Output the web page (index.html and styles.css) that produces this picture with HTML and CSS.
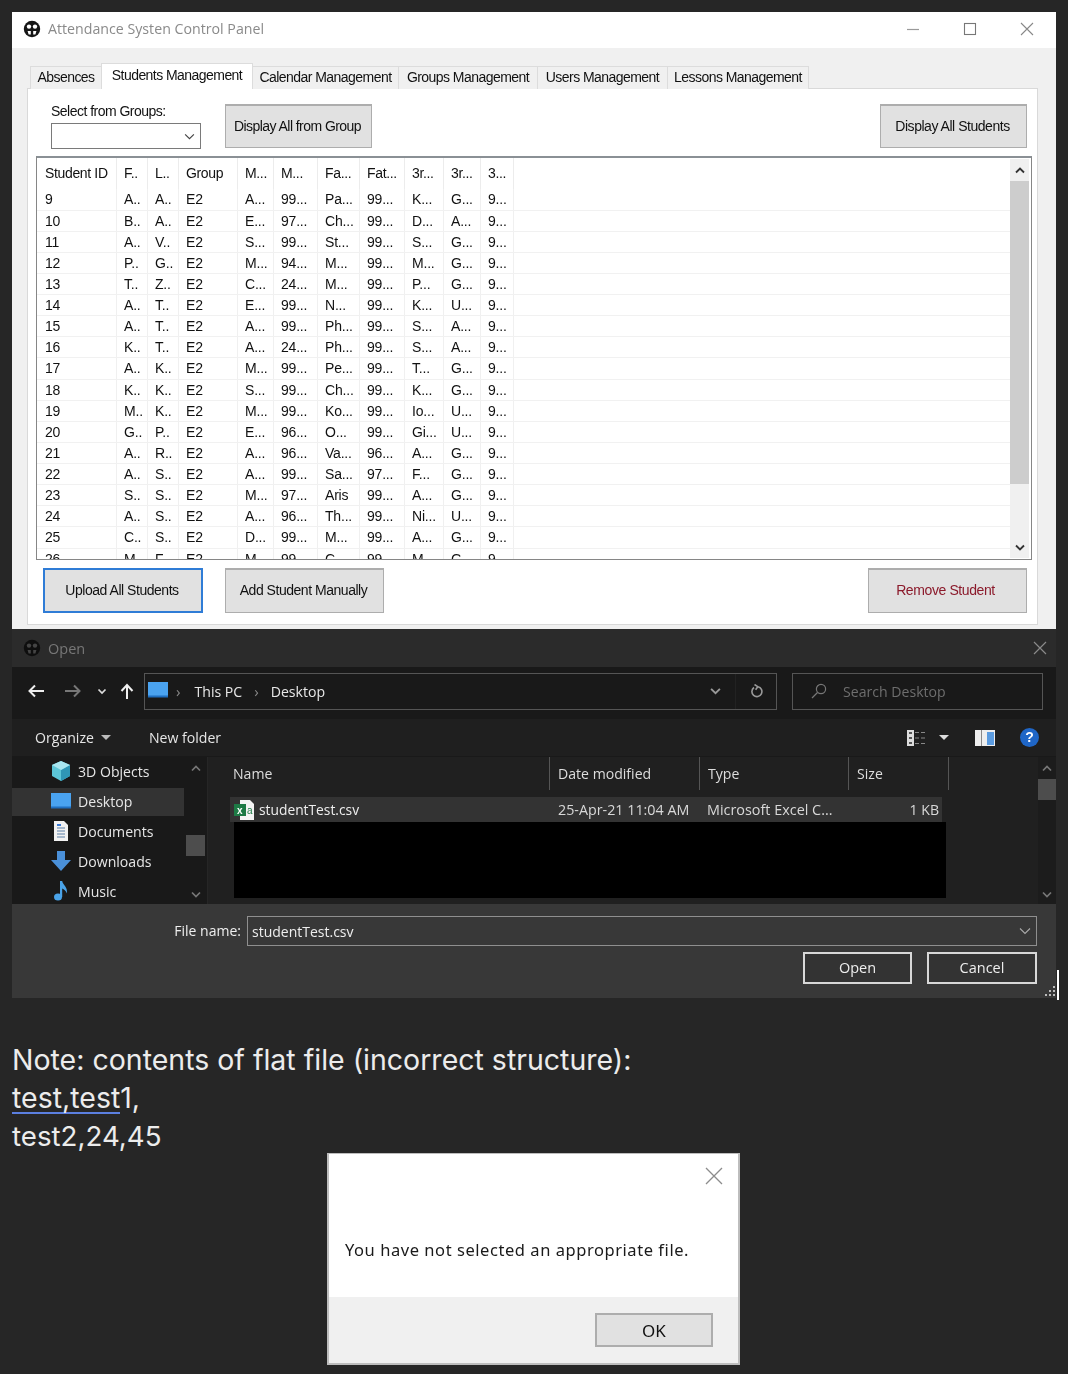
FILE: index.html
```html
<!DOCTYPE html>
<html lang="en">
<head>
<meta charset="utf-8">
<title>Attendance System Control Panel</title>
<link rel="stylesheet" href="styles.css">
</head>
<body>
<section class="win">
  <header class="titlebar">
    <svg class="appicon" viewBox="0 0 18 18"><circle cx="9" cy="9" r="8.2" fill="#161616"/><circle cx="6" cy="6.6" r="2.2" fill="#fff"/><circle cx="12" cy="6.6" r="2.2" fill="#fff"/><path d="M4.6 11h3.2v3.6H5.6zM10.2 11h3.2l-1 3.6h-2.2z" fill="#fff"/></svg>
    <span class="title">Attendance Systen Control Panel</span>
    <div class="winctl">
      <svg viewBox="0 0 14 14" class="ctl"><path d="M1 7.5h12" stroke="#9a9a9a" stroke-width="1.2"/></svg>
      <svg viewBox="0 0 14 14" class="ctl"><rect x="1.5" y="1.5" width="11" height="11" fill="none" stroke="#777" stroke-width="1.1"/></svg>
      <svg viewBox="0 0 14 14" class="ctl"><path d="M1 1l12 12M13 1L1 13" stroke="#888" stroke-width="1.1"/></svg>
    </div>
  </header>
  <div class="winbody">
    <nav class="tabs">
      <span class="tab tab-abs">Absences</span>
      <span class="tab tab-active">Students Management</span>
      <span class="tab tab-cal">Calendar Management</span>
      <span class="tab tab-grp">Groups Management</span>
      <span class="tab tab-usr">Users Management</span>
      <span class="tab tab-les">Lessons Management</span>
    </nav>
    <div class="panel">
      <div class="toprow">
        <div class="groupsel">
          <label class="sel-label">Select from Groups:</label>
          <div class="combo"><svg viewBox="0 0 12 8" class="combo-arrow"><path d="M1 1.5l5 5 5-5" fill="none" stroke="#444" stroke-width="1.3"/></svg></div>
        </div>
        <button class="btn btn-group">Display All from Group</button>
        <button class="btn btn-all">Display All Students</button>
      </div>
      <div class="table">
        <div class="rows">
          <div class="row head"><span>Student ID</span><span>F..</span><span>L..</span><span>Group</span><span>M...</span><span>M...</span><span>Fa...</span><span>Fat...</span><span>3r...</span><span>3r...</span><span>3...</span></div>
          <div class="row"><span>9</span><span>A..</span><span>A..</span><span>E2</span><span>A...</span><span>99...</span><span>Pa...</span><span>99...</span><span>K...</span><span>G...</span><span>9...</span></div>
          <div class="row"><span>10</span><span>B..</span><span>A..</span><span>E2</span><span>E...</span><span>97...</span><span>Ch...</span><span>99...</span><span>D...</span><span>A...</span><span>9...</span></div>
          <div class="row"><span>11</span><span>A..</span><span>V..</span><span>E2</span><span>S...</span><span>99...</span><span>St...</span><span>99...</span><span>S...</span><span>G...</span><span>9...</span></div>
          <div class="row"><span>12</span><span>P..</span><span>G..</span><span>E2</span><span>M...</span><span>94...</span><span>M...</span><span>99...</span><span>M...</span><span>G...</span><span>9...</span></div>
          <div class="row"><span>13</span><span>T..</span><span>Z..</span><span>E2</span><span>C...</span><span>24...</span><span>M...</span><span>99...</span><span>P...</span><span>G...</span><span>9...</span></div>
          <div class="row"><span>14</span><span>A..</span><span>T..</span><span>E2</span><span>E...</span><span>99...</span><span>N...</span><span>99...</span><span>K...</span><span>U...</span><span>9...</span></div>
          <div class="row"><span>15</span><span>A..</span><span>T..</span><span>E2</span><span>A...</span><span>99...</span><span>Ph...</span><span>99...</span><span>S...</span><span>A...</span><span>9...</span></div>
          <div class="row"><span>16</span><span>K..</span><span>T..</span><span>E2</span><span>A...</span><span>24...</span><span>Ph...</span><span>99...</span><span>S...</span><span>A...</span><span>9...</span></div>
          <div class="row"><span>17</span><span>A..</span><span>K..</span><span>E2</span><span>M...</span><span>99...</span><span>Pe...</span><span>99...</span><span>T...</span><span>G...</span><span>9...</span></div>
          <div class="row"><span>18</span><span>K..</span><span>K..</span><span>E2</span><span>S...</span><span>99...</span><span>Ch...</span><span>99...</span><span>K...</span><span>G...</span><span>9...</span></div>
          <div class="row"><span>19</span><span>M..</span><span>K..</span><span>E2</span><span>M...</span><span>99...</span><span>Ko...</span><span>99...</span><span>Io...</span><span>U...</span><span>9...</span></div>
          <div class="row"><span>20</span><span>G..</span><span>P..</span><span>E2</span><span>E...</span><span>96...</span><span>O...</span><span>99...</span><span>Gi...</span><span>U...</span><span>9...</span></div>
          <div class="row"><span>21</span><span>A..</span><span>R..</span><span>E2</span><span>A...</span><span>96...</span><span>Va...</span><span>96...</span><span>A...</span><span>G...</span><span>9...</span></div>
          <div class="row"><span>22</span><span>A..</span><span>S..</span><span>E2</span><span>A...</span><span>99...</span><span>Sa...</span><span>97...</span><span>F...</span><span>G...</span><span>9...</span></div>
          <div class="row"><span>23</span><span>S..</span><span>S..</span><span>E2</span><span>M...</span><span>97...</span><span>Aris</span><span>99...</span><span>A...</span><span>G...</span><span>9...</span></div>
          <div class="row"><span>24</span><span>A..</span><span>S..</span><span>E2</span><span>A...</span><span>96...</span><span>Th...</span><span>99...</span><span>Ni...</span><span>U...</span><span>9...</span></div>
          <div class="row"><span>25</span><span>C..</span><span>S..</span><span>E2</span><span>D...</span><span>99...</span><span>M...</span><span>99...</span><span>A...</span><span>G...</span><span>9...</span></div>
          <div class="row"><span>26</span><span>M..</span><span>F..</span><span>E2</span><span>M...</span><span>99...</span><span>C...</span><span>99...</span><span>M...</span><span>G...</span><span>9...</span></div>
        </div>
        <div class="vscroll">
          <div class="vs-btn"><svg viewBox="0 0 10 7"><path d="M1 5.5l4-4 4 4" fill="none" stroke="#333" stroke-width="1.8"/></svg></div>
          <div class="vs-track"><div class="vs-thumb"></div></div>
          <div class="vs-btn"><svg viewBox="0 0 10 7"><path d="M1 1.500l4 4 4-4" fill="none" stroke="#333" stroke-width="1.8"/></svg></div>
        </div>
      </div>
      <div class="botrow">
        <button class="btn btn-upload">Upload All Students</button>
        <button class="btn btn-add">Add Student Manually</button>
        <button class="btn btn-remove">Remove Student</button>
      </div>
    </div>
  </div>
</section>

<section class="dlg">
  <header class="dlg-title">
    <svg class="appicon" viewBox="0 0 18 18"><circle cx="9" cy="9" r="8.2" fill="#0e0e0e"/><circle cx="6" cy="6.6" r="2.2" fill="#444"/><circle cx="12" cy="6.6" r="2.2" fill="#444"/><path d="M4.6 11h3.2v3.6H5.6zM10.2 11h3.2l-1 3.6h-2.2z" fill="#444"/></svg>
    <span class="dlg-open">Open</span>
    <svg viewBox="0 0 14 14" class="dlg-x"><path d="M1 1l12 12M13 1L1 13" stroke="#8a8a8a" stroke-width="1.2"/></svg>
  </header>
  <div class="navbar">
    <svg viewBox="0 0 18 14" class="nav-i"><path d="M17 7H3M8 1.5L2.5 7 8 12.500" fill="none" stroke="#eee" stroke-width="2"/></svg>
    <svg viewBox="0 0 18 14" class="nav-i nav-fwd"><path d="M1 7h14M10 1.500L15.500 7 10 12.500" fill="none" stroke="#777" stroke-width="2"/></svg>
    <svg viewBox="0 0 10 7" class="nav-d"><path d="M1.500 1.500l3.500 3.500 3.500-3.500" fill="none" stroke="#ddd" stroke-width="1.700"/></svg>
    <svg viewBox="0 0 14 16" class="nav-u"><path d="M7 16V2.500M1.500 8L7 2l5.500 6" fill="none" stroke="#f0f0f0" stroke-width="2"/></svg>
    <div class="addr">
      <svg viewBox="0 0 20 16" class="ico-desk"><rect width="20" height="15" fill="#4aa3f0"/><rect y="13.500" width="20" height="2" fill="#1f6fc0"/></svg>
      <span class="chev chev-first">›</span><span class="crumb">This PC</span><span class="chev">›</span><span class="crumb">Desktop</span>
      <svg viewBox="0 0 10 7" class="addr-d"><path d="M1 1.500l4 4 4-4" fill="none" stroke="#999" stroke-width="1.700"/></svg>
      <div class="refresh"><svg viewBox="0 0 14 14" class="ico-ref"><path d="M4 3.500a5 5 0 1 0 4-.8M4.500 0.500l3.300 2.200-2.200 3" fill="none" stroke="#999" stroke-width="1.600"/></svg></div>
    </div>
    <div class="search">
      <svg viewBox="0 0 16 16" class="ico-search"><circle cx="10" cy="6" r="4.600" fill="none" stroke="#777" stroke-width="1.200"/><path d="M6.500 9.500L1 15" stroke="#777" stroke-width="1.300"/></svg>
      <span>Search Desktop</span>
    </div>
  </div>
  <div class="toolbar">
    <span class="tool">Organize</span><i class="caret"></i>
    <span class="tool tool-new">New folder</span>
    <div class="viewicons">
      <svg viewBox="0 0 21 16" class="ico-list"><rect width="7" height="16" fill="#ddd"/><path d="M2 3h3M2 8h3M2 13h3" stroke="#555" stroke-width="2"/><path d="M8 2.500h12M8 8h12M8 13.500h12" stroke="#888" stroke-dasharray="4 2"/></svg>
      <i class="caret caret-v"></i>
      <svg viewBox="0 0 20 16" class="ico-pane"><rect width="20" height="16" fill="#eee"/><rect x="12" y="2" width="7" height="13" fill="#5a9be0"/><rect x="6" y="0" width="1" height="16" fill="#888"/></svg>
      <span class="help">?</span>
    </div>
  </div>
  <div class="content">
    <aside class="side">
      <ul class="tree">
        <li><svg viewBox="0 0 20 20" class="ico"><path d="M10 0l9 4v11l-9 5-9-5V4z" fill="#5cc6d8"/><path d="M10 9l9-5v11l-9 5z" fill="#2f96b5"/><path d="M10 0l9 4-9 5-9-5z" fill="#a8e6f0"/></svg>3D Objects</li>
        <li class="sel"><svg viewBox="0 0 20 16" class="ico"><rect width="20" height="15" fill="#4aa3f0"/><rect y="13.500" width="20" height="2" fill="#1f6fc0"/></svg>Desktop</li>
        <li><svg viewBox="0 0 16 20" class="ico"><path d="M1 0h10l4 4v16H1z" fill="#f2f2f2"/><path d="M4 7h8M4 10h8M4 13h8M4 16h8" stroke="#5b7ea6"/><path d="M4 4h4" stroke="#3a7bd5" stroke-width="2"/></svg>Documents</li>
        <li><svg viewBox="0 0 20 20" class="ico"><path d="M6 0h8v9h6L10 20 0 9h6z" fill="#4a90d9"/></svg>Downloads</li>
        <li><svg viewBox="0 0 16 20" class="ico"><ellipse cx="5" cy="16" rx="4" ry="3.600" fill="#4aa3e8"/><path d="M7 0h2.200c.6 4 5.800 6 4.600 12.500-1-3-2.800-4.300-4.600-5V16H7z" fill="#4aa3e8"/></svg>Music</li>
      </ul>
      <div class="sidebar-scroll">
        <svg viewBox="0 0 10 7" class="sb-a"><path d="M1 5.500l4-4 4 4" fill="none" stroke="#777" stroke-width="1.700"/></svg>
        <div class="sb-thumb"></div>
        <svg viewBox="0 0 10 7" class="sb-a sb-b"><path d="M1 1.500l4 4 4-4" fill="none" stroke="#777" stroke-width="1.700"/></svg>
      </div>
    </aside>
    <div class="files">
      <div class="cols">
        <span class="c-name">Name</span>
        <span class="c-date">Date modified</span>
        <span class="c-type">Type</span>
        <span class="c-size">Size</span>
      </div>
      <div class="filerow">
        <svg viewBox="0 0 20 20" class="ico-xl"><path d="M6 0h10l4 4v16H6z" fill="#f4f4f4"/><rect x="0" y="4" width="12" height="12" fill="#1d7a45"/><text x="3" y="13.500" class="xl-x">x</text><text x="13" y="13.500" class="xl-a">a</text></svg>
        <span class="f-name">studentTest.csv</span>
        <span class="f-date">25-Apr-21 11:04 AM</span>
        <span class="f-type">Microsoft Excel C...</span>
        <span class="f-size">1 KB</span>
      </div>
      <div class="redact"></div>
    </div>
    <div class="mainscroll">
      <svg viewBox="0 0 10 7" class="sb-a"><path d="M1 5.500l4-4 4 4" fill="none" stroke="#777" stroke-width="1.700"/></svg>
      <div class="ms-thumb"></div>
      <svg viewBox="0 0 10 7" class="sb-a sb-b"><path d="M1 1.500l4 4 4-4" fill="none" stroke="#777" stroke-width="1.700"/></svg>
    </div>
  </div>
  <div class="dlg-foot">
    <div class="fname-row">
      <label class="fname-l">File name:</label>
      <div class="fname"><span class="fname-v">studentTest.csv</span><svg viewBox="0 0 12 8" class="fname-d"><path d="M1 1.500l5 5 5-5" fill="none" stroke="#aaa" stroke-width="1.100"/></svg></div>
    </div>
    <div class="dlg-btns">
      <button class="dbtn dbtn-open">Open</button>
      <button class="dbtn">Cancel</button>
    </div>
    <svg viewBox="0 0 12 12" class="grip"><path d="M9 1h2v2H9zM5 5h2v2H5zM9 5h2v2H9zM1 9h2v2H1zM5 9h2v2H5zM9 9h2v2H9z" fill="#bbb"/></svg>
  </div>
  <div class="caretbar"></div>
</section>

<div class="note">
  <p>Note: contents of flat file (incorrect structure):</p>
  <p><span class="under">test,test</span>1,</p>
  <p class="note-3">test2,24,45</p>
</div>

<section class="msg">
  <div class="msg-top">
    <svg viewBox="0 0 18 18" class="msg-x"><path d="M1 1l16 16M17 1L1 17" stroke="#8c8c8c" stroke-width="1.300"/></svg>
    <p class="msg-text">You have not selected an appropriate file.</p>
  </div>
  <div class="msg-foot"><button class="okbtn">OK</button></div>
</section>
</body>
</html>
```

FILE: styles.css
```css
* { box-sizing: border-box; }
html, body { margin: 0; padding: 0; }
body {
  width: 1068px;
  height: 1374px;
  overflow: hidden;
  background: #262626;
  padding-top: 12px;
  font-family: "Liberation Sans", Arial, sans-serif;
}
button { font: inherit; padding: 0; cursor: default; }
ul { list-style: none; margin: 0; padding: 0; }
p { margin: 0; }

/* main window */
.win {
  margin-left: 12px;
  width: 1044px;
  height: 617px;
  display: flex;
  flex-direction: column;
  filter: blur(0.35px);
}
.titlebar {
  height: 36px;
  background: #fff;
  display: flex;
  align-items: center;
  padding-left: 11px;
  padding-bottom: 3px;
  flex: none;
}
.appicon { width: 18px; height: 18px; flex: none; }
.title {
  margin-left: 7px;
  font-family: "Open Sans", sans-serif;
  font-size: 14.200px;
  color: #8a8a8a;
}
.winctl { margin-left: auto; display: flex; gap: 43px; padding-right: 22px; }
.ctl { width: 14px; height: 14px; }
.winbody {
  flex: 1;
  background: #f0f0f0;
  padding: 15px 18px 4px 15px;
  display: flex;
  flex-direction: column;
  min-height: 0;
}
.tabs {
  display: flex;
  align-items: flex-end;
  height: 26px;
  padding-left: 3px;
  position: relative;
  z-index: 1;
  flex: none;
  font-size: 14px;
  letter-spacing: -0.550px;
  color: #111;
}
.tab {
  height: 23px;
  background: #f0f0f0;
  border: 1px solid #dcdcdc;
  border-bottom: 0;
  display: flex;
  align-items: center;
  justify-content: center;
  margin-right: -1px;
  padding-bottom: 3px;
  white-space: nowrap;
}
.tab-abs { width: 72px; }
.tab-active { width: 152px; height: 26px; background: #fff; padding-bottom: 4px; }
.tab-cal { width: 147px; }
.tab-grp { width: 140px; }
.tab-usr { width: 131px; }
.tab-les { width: 142px; }
.panel {
  flex: 1;
  background: #fff;
  border: 1px solid #d9d9d9;
  margin-top: -1px;
  padding: 15px 5px 0 8px;
  display: flex;
  flex-direction: column;
  min-height: 0;
}
.toprow { display: flex; height: 44px; flex: none; padding-left: 15px; padding-right: 5px; }
.groupsel { width: 150px; }
.sel-label { display: block; font-size: 14px; letter-spacing: -0.520px; color: #111; line-height: 16px; margin-bottom: 3px; margin-top: -1px; padding-bottom: 1px; }
.combo {
  height: 26px;
  border: 1px solid #7a7a7a;
  background: #fff;
  position: relative;
  display: flex;
  align-items: center;
  justify-content: flex-end;
  padding-right: 5px;
}
.combo-arrow { width: 11px; height: 7px; }
.btn {
  background: #e1e1e1;
  border: 1px solid #adadad;
  border-width: 2px 1px 1px 1px;
  color: #111;
  font-size: 14px;
  letter-spacing: -0.470px;
  white-space: nowrap;
  padding: 0 2px 2px 0;
}
.btn-group { width: 147px; margin-left: 24px; letter-spacing: -0.550px; }
.btn-all { width: 147px; margin-left: auto; }
.table {
  margin-top: 8px;
  height: 404px;
  border: 1px solid #868686;
  border-top: 2px solid #8a9095;
  background: #fff;
  display: flex;
  flex: none;
  padding: 0 2px 0 0;
}
.rows { flex: 1; overflow: hidden; font-size: 14px; color: #111; letter-spacing: -0.200px; min-width: 0; }
.row {
  display: grid;
  grid-template-columns: 80px 31px 31px 59px 36px 44px 42px 45px 39px 37px 33px 1fr;
  height: 21.140px;
  line-height: 20px;
  border-bottom: 1.500px solid #f1f1f1;
}
.row span {
  padding-left: 7px;
  border-right: 1px solid #f0f0f0;
  white-space: nowrap;
  overflow: hidden;
}
.row span:first-child { padding-left: 8px; }
.row.head { height: 31.400px; line-height: 30px; border-bottom: 0; letter-spacing: -0.350px; }
.row.head span { border-right: 1.500px solid #ececec; }
.vscroll { width: 19px; display: flex; flex-direction: column; margin: 1px 0; flex: none; }
.vs-btn { height: 22px; background: #f0f0f0; display: flex; align-items: center; justify-content: center; }
.vs-btn svg { width: 10px; height: 7px; }
.vs-track { flex: 1; background: #f0f0f0; }
.vs-thumb { height: 303px; background: #cdcdcd; }
.botrow { display: flex; height: 45px; margin-top: 8px; padding-left: 7px; padding-right: 5px; flex: none; }
.btn-upload { width: 160px; border: 2px solid #2f7cd6; }
.btn-add { width: 159px; margin-left: 22px; }
.btn-remove { width: 159px; margin-left: auto; color: #8b1a2b; letter-spacing: -0.400px; padding-right: 4px; }

/* file dialog */
.dlg {
  margin-left: 12px;
  width: 1044px;
  height: 369px;
  display: flex;
  flex-direction: column;
  font-family: "Open Sans", "Noto Sans", sans-serif;
  font-size: 14.100px;
  color: #e4e4e4;
  position: relative;
  filter: blur(0.3px);
}
.dlg-title {
  height: 38px;
  background: #2b2b2b;
  display: flex;
  align-items: center;
  padding: 0 9px 0 11px;
  flex: none;
}
.dlg-open { margin-left: 7px; color: #777; font-size: 14.500px; }
.dlg-x { width: 14px; height: 14px; margin-left: auto; }
.navbar {
  height: 52px;
  background: #191919;
  display: flex;
  align-items: center;
  padding-left: 15px;
  padding-bottom: 4px;
  flex: none;
}
.nav-i { width: 18px; height: 14px; }
.nav-fwd { margin-left: 19px; }
.nav-d { width: 10px; height: 7px; margin-left: 15px; }
.nav-u { width: 14px; height: 16px; margin-left: 13px; margin-right: 10px; }
.addr {
  width: 633px;
  height: 37px;
  border: 1px solid #555;
  display: flex;
  align-items: center;
  padding-left: 3px;
}
.ico-desk { width: 20px; height: 16px; margin-bottom: 2px; }
.chev { color: #888; margin: 0 12px 0 12px; font-size: 15px; }
.chev-first { margin: 0 14px 0 8px; }
.crumb { color: #e8e8e8; }
.addr-d { width: 11px; height: 8px; margin-left: auto; margin-right: 14px; }
.refresh { width: 41px; height: 100%; border-left: 1px solid #222; display: flex; align-items: center; justify-content: center; padding-left: 2px; }
.ico-ref { width: 14px; height: 14px; }
.search {
  width: 251px;
  height: 37px;
  margin-left: 15px;
  border: 1px solid #555;
  display: flex;
  align-items: center;
  padding-left: 18px;
  color: #6e6e6e;
}
.ico-search { width: 16px; height: 16px; margin-right: 16px; }
.toolbar {
  height: 38px;
  background: #1f1f1f;
  display: flex;
  align-items: center;
  padding-left: 23px;
  flex: none;
  border-bottom: 1px solid #191919;
}
.tool { color: #e6e6e6; }
.caret {
  width: 0;
  height: 0;
  border: 5px solid transparent;
  border-top: 5px solid #bbb;
  border-bottom: 0;
  margin-left: 7px;
}
.tool-new { margin-left: 38px; }
.viewicons { margin-left: auto; display: flex; align-items: center; padding-right: 17px; }
.ico-list { width: 21px; height: 16px; }
.caret-v { margin-left: 11px; border-top-color: #ddd; border-left-width: 5.500px; border-right-width: 5.500px; }
.ico-pane { width: 20px; height: 16px; margin-left: 26px; }
.help {
  width: 19px;
  height: 19px;
  border-radius: 50%;
  background: #1f66c7;
  color: #fff;
  font-family: "Liberation Sans", sans-serif;
  font-weight: 700;
  font-size: 14px;
  line-height: 19px;
  text-align: center;
  margin-left: 25px;
}
.content { height: 147px; display: flex; background: #202020; flex: none; overflow: hidden; }
.side { width: 196px; display: flex; background: #191919; border-right: 1px solid #262626; flex: none; }
.tree { width: 172px; flex: none; }
.tree li {
  height: 30px;
  display: flex;
  align-items: center;
  padding: 0 0 2px 39px;
  color: #e6e6e6;
}
.tree li.sel { background: #333; height: 28px; margin: 1px 0; }
.tree .ico { width: 20px; height: 20px; margin-right: 7px; flex: none; }
.sidebar-scroll {
  width: 23px;
  display: flex;
  flex-direction: column;
  align-items: center;
  padding: 8px 0 6px;
  flex: none;
}
.sb-a { width: 10px; height: 7px; flex: none; }
.sb-thumb { width: 19px; height: 21px; background: #4d4d4d; margin-top: 63px; }
.sb-b { margin-top: auto; }
.files { flex: 1; min-width: 0; position: relative; padding-left: 22px; }
.cols {
  display: grid;
  grid-template-columns: 322px 150px 149px 100px;
  height: 32px;
  align-items: stretch;
  margin-left: -2px;
  color: #ddd;
}
.cols span { padding: 1px 0 0 8px; line-height: 32px; border-right: 1px solid #555; }
.cols .c-name { padding-left: 5px; }
.filerow {
  display: grid;
  grid-template-columns: 29px 291px 149px 149px 94px;
  margin-top: 8px;
  height: 25px;
  width: 712px;
  background: #333;
  align-items: center;
  line-height: 25px;
  color: #d8d8d8;
}
.ico-xl { width: 20px; height: 20px; margin-left: 4px; }
.xl-x { font-size: 10px; font-weight: 700; fill: #fff; font-family: "Liberation Sans", sans-serif; }
.xl-a { font-size: 10px; fill: #1d7a45; font-family: "Liberation Sans", sans-serif; }
.f-name { color: #eee; font-size: 13.800px; }
.f-date, .f-type { padding-left: 8px; }
.f-date { font-size: 14.300px; white-space: nowrap; }
.f-type { font-size: 14.400px; }
.f-size { text-align: right; padding-right: 3px; }
.redact { width: 712px; height: 76px; background: #000; margin-left: 4px; }
.mainscroll {
  width: 18px;
  background: #1c1c1c;
  display: flex;
  flex-direction: column;
  align-items: center;
  padding: 8px 0 6px;
  flex: none;
}
.ms-thumb { width: 18px; height: 21px; background: #4d4d4d; margin-top: 7px; }
.dlg-foot {
  flex: 1;
  background: #383838;
  padding: 12px 19px 0 0;
  position: relative;
}
.fname-row { display: flex; align-items: center; justify-content: flex-end; }
.fname-l { color: #eee; margin-right: 6px; margin-top: -2px; font-size: 14px; }
.fname {
  width: 790px;
  height: 30px;
  border: 1px solid #8f8f8f;
  padding-left: 4px;
  color: #eee;
  display: flex;
  align-items: center;
}
.fname-v { font-size: 14px; padding-top: 1px; }
.fname-d { width: 12px; height: 8px; margin-left: auto; margin-right: 5px; }
.dlg-btns { display: flex; justify-content: flex-end; gap: 15px; margin-top: 6px; }
.dbtn {
  width: 110px;
  height: 32px;
  background: #333;
  color: #eee;
  border: 2px solid #d8d8d8;
  font-family: inherit;
  font-size: 14.500px;
  padding-bottom: 2px;
}
.dbtn-open { width: 109px; }
.grip { position: absolute; right: 0; bottom: 1px; width: 12px; height: 12px; }
.caretbar { position: absolute; right: -3px; bottom: -2px; width: 2px; height: 30px; background: #fff; }

/* note */
.note {
  margin-left: 12px;
  margin-top: 43px;
  font-family: Inter, "Liberation Sans", sans-serif;
  font-size: 28.500px;
  line-height: 38px;
  color: #ececec;
  height: 113px;
}
.note-3 { font-size: 27.700px; }
.under { border-bottom: 2.500px solid #5b7fe0; display: inline-block; line-height: 28px; }

/* message box */
.msg {
  margin-left: 327px;
  width: 413px;
  height: 212px;
  margin-top: -1px;
  border: 2px solid #bdbdbd;
  border-top-width: 1px;
  display: flex;
  flex-direction: column;
  font-family: "Noto Sans", "Open Sans", sans-serif;
  filter: blur(0.25px);
}
.msg-top { height: 143px; background: #fff; padding: 13px 0 0 16px; flex: none; }
.msg-x { display: block; width: 18px; height: 18px; margin-left: 360px; }
.msg-text { margin-top: 53px; font-size: 16.500px; letter-spacing: 0.550px; color: #1a1a1a; }
.msg-foot { flex: 1; background: #f0f0f0; padding: 16px 0 0 266px; }
.okbtn {
  width: 118px;
  height: 34px;
  background: #e1e1e1;
  border: 2px solid #adadad;
  color: #111;
  font-family: inherit;
  font-size: 17px;
}
```
